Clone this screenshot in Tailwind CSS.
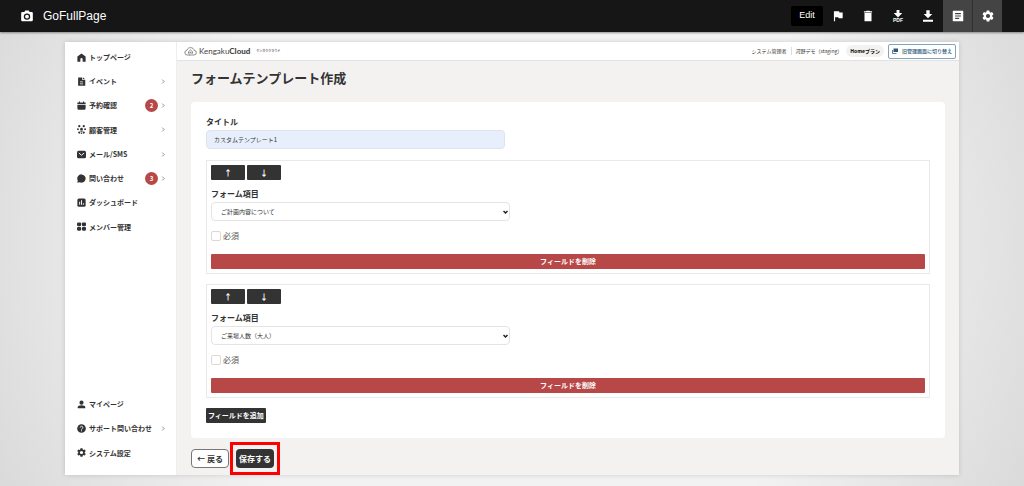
<!DOCTYPE html>
<html lang="ja">
<head>
    <meta charset="UTF-8">
    <meta name="viewport" content="width=device-width, initial-scale=1.0">
    <title>フォームテンプレート作成</title>
    <script src="https://cdn.jsdelivr.net/npm/@tailwindcss/browser@4"></script>
</head>
<body class="min-h-screen bg-radial-[circle_at_50%_50%] from-[#f2f2f2] from-60% to-[#dadada] font-['Noto_Sans_CJK_JP',sans-serif] text-[#333]">

    <!-- Extension toolbar -->
    <header class="flex h-8 items-stretch bg-[#161616] pl-5 pr-[22px] text-white shadow-[0_1px_2px_rgba(0,0,0,0.4)]">
        <div class="flex items-center gap-[9px] font-['Liberation_Sans',sans-serif] text-[12px]">
            <svg class="size-3.5" viewBox="0 0 24 24" fill="currentColor"><path fill-rule="evenodd" d="M4 5h3.5L9 2.500h6L16.500 5H20a2 2 0 0 1 2 2v12a2 2 0 0 1-2 2H4a2 2 0 0 1-2-2V7a2 2 0 0 1 2-2zm8 2.500a5.500 5.500 0 1 0 0 11 5.500 5.500 0 0 0 0-11zm0 2.200a3.300 3.300 0 1 1 0 6.600 3.300 3.300 0 0 1 0-6.600z"/></svg>
            <h1>GoFullPage</h1>
        </div>
        <div class="ml-auto flex items-center">
            <button class="h-5 w-8 rounded-xs bg-black font-['Liberation_Sans',sans-serif] text-[9px]">Edit</button>
            <button class="flex w-[30px] justify-center" aria-label="Flag"><svg class="size-3.5" viewBox="0 0 24 24" fill="currentColor"><path d="M14.400 6L14 4H5v17h2v-7h5.600l.4 2h7V6z"/></svg></button>
            <button class="flex w-[30px] justify-center" aria-label="Delete"><svg class="size-3.5" viewBox="0 0 24 24" fill="currentColor"><path d="M6 21h12V7H6v14zM19 4h-3.500l-1-1h-5l-1 1H5v2h14V4z"/></svg></button>
            <button class="flex w-[30px] flex-col items-center" aria-label="Download PDF">
                <svg class="h-2 w-2.5" viewBox="0 0 14 11" fill="currentColor"><path d="M5 0h4v4h4L7 10.500 1 4h4z"/></svg>
                <span class="font-['Liberation_Sans',sans-serif] text-[5px] font-bold leading-[5px]">PDF</span>
            </button>
            <button class="flex w-[30px] justify-center" aria-label="Download"><svg class="size-4" viewBox="0 0 24 24" fill="currentColor"><path d="M18.500 9h-4V3.500h-5V9h-4l6.500 6.500zM4.500 17.500v3h15v-3z"/></svg></button>
            <button class="flex h-8 w-[30px] items-center justify-center border-r border-[#303030] bg-[#444]" aria-label="Pages"><svg class="size-3.5" viewBox="0 0 24 24" fill="currentColor"><path fill-rule="evenodd" d="M4 3h16a1 1 0 0 1 1 1v16a1 1 0 0 1-1 1H4a1 1 0 0 1-1-1V4a1 1 0 0 1 1-1zm3 4v2h10V7zm0 4v2h10v-2zm0 4v2h7v-2z"/></svg></button>
            <button class="flex h-8 w-[29px] items-center justify-center bg-[#444]" aria-label="Settings"><svg class="size-3.5" viewBox="0 0 24 24" fill="currentColor"><use href="#gear"/></svg></button>
        </div>
    </header>

    <svg class="hidden">
        <path id="gear" d="M19.140 12.940c.04-.3.06-.61.06-.94 0-.32-.02-.64-.07-.94l2.030-1.580a.49.49 0 0 0 .12-.61l-1.920-3.320a.488.488 0 0 0-.59-.22l-2.390.96c-.5-.38-1.030-.7-1.620-.94l-.36-2.540a.484.484 0 0 0-.48-.41h-3.840c-.24 0-.43.17-.47.41l-.36 2.540c-.59.24-1.130.57-1.620.94l-2.390-.96c-.22-.08-.47 0-.59.22L2.740 8.870c-.12.21-.08.47.12.61l2.030 1.580c-.05.3-.09.63-.09.94s.02.64.07.94l-2.030 1.580a.49.49 0 0 0-.12.61l1.920 3.320c.12.22.37.29.59.22l2.390-.96c.5.38 1.030.7 1.620.94l.36 2.540c.05.24.24.41.48.41h3.840c.24 0 .44-.17.47-.41l.36-2.540c.59-.24 1.130-.56 1.620-.94l2.390.96c.22.08.47 0 .59-.22l1.920-3.320c.12-.22.07-.47-.12-.61l-2.010-1.580zM12 15.600A3.600 3.600 0 1 1 12 8.400a3.600 3.600 0 0 1 0 7.200z"/>
        <path id="chevron" d="M2 1l3 3-3 3" fill="none" stroke="#666" stroke-width="1.200"/>
    </svg>

    <div class="mx-[65px] mt-2.5 mb-2.5 flex bg-white shadow-[0_0_5px_rgba(0,0,0,0.15)]">

        <!-- Sidebar -->
        <aside class="flex w-28 shrink-0 flex-col justify-between border-r border-[#eee] pt-[3px] pb-2.5 text-[7px] font-bold">
            <nav class="grid h-[194px] auto-rows-fr pl-3 pr-2.5">
                <a href="#" class="flex items-center gap-[3px]"><svg class="size-[9px]" viewBox="0 0 24 24" fill="currentColor"><path d="M12 1L1 9v14h8v-7a3 3 0 0 1 6 0v7h8V9z"/></svg>トップページ</a>
                <a href="#" class="flex items-center gap-[3px]"><svg class="size-[9px]" viewBox="0 0 24 24" fill="currentColor"><path fill-rule="evenodd" d="M3 1h11v7h8v15H3zM16 1l6 5h-6zM8 12v2h8v-2zm0 5v2h8v-2z"/></svg>イベント<svg class="ml-auto size-[5px]" viewBox="0 0 8 8"><use href="#chevron"/></svg></a>
                <a href="#" class="flex items-center gap-[3px]"><svg class="size-[9px]" viewBox="0 0 24 24" fill="currentColor"><path d="M1 8V4h4V1h3v3h8V1h3v3h4v4zM1 10h22v9a4 4 0 0 1-4 4H5a4 4 0 0 1-4-4z"/></svg>予約確認<span class="ml-auto flex size-[13px] items-center justify-center rounded-full bg-[#b84747] text-[6px] text-white">2</span><svg class="size-[5px]" viewBox="0 0 8 8"><use href="#chevron"/></svg></a>
                <a href="#" class="flex items-center gap-[3px]"><svg class="size-[9px]" viewBox="0 0 24 24" fill="currentColor"><circle cx="6" cy="3" r="3"/><circle cx="18" cy="3" r="3"/><circle cx="12" cy="11" r="3.500"/><circle cx="2.500" cy="11" r="2.500"/><circle cx="21.500" cy="11" r="2.500"/><path d="M8 15h8l-2 3h-4z"/><circle cx="6" cy="20" r="3"/><circle cx="18" cy="20" r="3"/><circle cx="12" cy="22" r="2"/></svg>顧客管理<svg class="ml-auto size-[5px]" viewBox="0 0 8 8"><use href="#chevron"/></svg></a>
                <a href="#" class="flex items-center gap-[3px]"><svg class="size-[9px]" viewBox="0 0 24 24"><rect x="0" y="2" width="24" height="20" rx="4" fill="currentColor"/><path d="M5 8l7 6 7-6" fill="none" stroke="#fff" stroke-width="2.500"/></svg>メール/SMS<svg class="ml-auto size-[5px]" viewBox="0 0 8 8"><use href="#chevron"/></svg></a>
                <a href="#" class="flex items-center gap-[3px]"><svg class="size-[9px]" viewBox="0 0 24 24" fill="currentColor"><path d="M12 1a11 11 0 1 1-5 20.800L1 23l1-6A11 11 0 0 1 12 1z"/></svg>問い合わせ<span class="ml-auto flex size-[13px] items-center justify-center rounded-full bg-[#b84747] text-[6px] text-white">3</span><svg class="size-[5px]" viewBox="0 0 8 8"><use href="#chevron"/></svg></a>
                <a href="#" class="flex items-center gap-[3px]"><svg class="size-[9px]" viewBox="0 0 24 24"><rect x="1" y="1" width="22" height="22" rx="4" fill="currentColor"/><path d="M7 10v8M12 6v12M17 14v4" stroke="#fff" stroke-width="2.500"/></svg>ダッシュボード</a>
                <a href="#" class="flex items-center gap-[3px]"><svg class="size-[9px]" viewBox="0 0 24 24" fill="currentColor"><rect x="0" y="1" width="11" height="10" rx="3"/><rect x="13" y="1" width="11" height="10" rx="3"/><rect x="0" y="13" width="11" height="10" rx="3"/><rect x="13" y="13" width="11" height="10" rx="3"/></svg>メンバー管理</a>
            </nav>
            <nav class="grid h-[73px] auto-rows-fr pl-3 pr-2.5">
                <a href="#" class="flex items-center gap-[3px]"><svg class="size-[9px]" viewBox="0 0 24 24" fill="currentColor"><circle cx="12" cy="7" r="5.500"/><path d="M2 22v-3c0-3 4-5 10-5s10 2 10 5v3z"/></svg>マイページ</a>
                <a href="#" class="flex items-center gap-[3px]"><svg class="size-[9px]" viewBox="0 0 24 24"><circle cx="12" cy="12" r="11.500" fill="currentColor"/><path d="M8.500 9.500a3.500 3.500 0 1 1 5.500 2.800c-1.300.9-2 1.200-2 2.700M12 17v2.500" fill="none" stroke="#fff" stroke-width="2.500"/></svg>サポート問い合わせ<svg class="ml-auto size-[5px]" viewBox="0 0 8 8"><use href="#chevron"/></svg></a>
                <a href="#" class="flex items-center gap-[3px]"><svg class="size-[9px]" viewBox="2 2 20 20" fill="currentColor"><use href="#gear"/></svg>システム設定</a>
            </nav>
        </aside>

        <div class="min-w-0 flex-1 bg-[#f3f2f0]">
            <!-- App header -->
            <div class="flex h-[19px] items-center border-b border-[#e4e2e0] bg-white pl-[7px] pr-[3px] text-[5px]">
                <svg class="h-[9px] w-[13px]" viewBox="0 0 36 27" fill="none" stroke="#555" stroke-width="2"><path d="M9 24a7 7 0 0 1-2-14C9 4 13 2 18 2c6 0 10 3 11 8a7 7 0 0 1-1 14H14"/><path d="M12 20v-6l6-5 6 5v6M16 20v-4h4v4M9 24h7"/></svg>
                <span class="ml-0.5 font-[Lato,sans-serif] text-[8px] text-[#444]">Kengaku<b class="font-black">Cloud</b></span>
                <span class="ml-1.5 text-[3px] font-bold text-[#666]">ケンガククラウド</span>
                <span class="ml-auto border-r border-[#ddd] pr-[5px]">システム管理者</span>
                <span class="pl-[3px]">河野デモ（staging）</span>
                <span class="ml-1 rounded-full bg-[#f3f2f0] px-1 py-0.5 font-bold text-black">Homeプラン</span>
                <button class="ml-1 flex h-[15px] items-center gap-1 rounded-xs border border-[#83a3bd] px-[3px] font-medium text-[#2d5878]"><svg class="size-[6px]" viewBox="0 0 12 12" fill="currentColor"><path d="M3 1h9v7H3z"/><path d="M1 4v7h8" fill="none" stroke="currentColor" stroke-width="1.500"/></svg>旧管理画面に切り替え</button>
            </div>

            <main class="px-3.5">
                <h2 class="mt-2 text-[13px] font-bold leading-[18px]">フォームテンプレート作成</h2>

                <form>
                    <div class="mt-[15px] rounded-sm bg-white px-[15px] pt-[15px] pb-[15px]">
                        <label for="title" class="block text-[8px] font-bold leading-[10px]">タイトル</label>
                        <input id="title" type="text" value="カスタムテンプレート1" class="mt-[3px] block h-[19px] w-[299px] rounded-sm border border-[#dfe3ea] bg-[#e7effc] px-[7px] text-[6px]">

                        <!-- Field 1 -->
                        <div class="mt-[11px] border border-[#e9e9e9] p-1">
                            <div class="flex gap-0.5 text-[8px] font-bold leading-[15px] text-white">
                                <button type="button" class="h-[15px] w-[34px] rounded-[1px] bg-[#333]">↑</button>
                                <button type="button" class="h-[15px] w-[34px] rounded-[1px] bg-[#333]">↓</button>
                            </div>
                            <label for="item1" class="mt-2 block text-[8px] font-bold leading-3">フォーム項目</label>
                            <div class="relative mt-0.5 w-[299px]">
                                <select id="item1" class="block h-[19px] w-full appearance-none rounded-sm border border-[#e4e4e4] bg-white px-[9px] text-[6px]">
                                    <option>ご計画内容について</option>
                                </select>
                                <svg class="pointer-events-none absolute right-0.5 top-2 h-1 w-[5px]" viewBox="0 0 10 8" fill="none" stroke="#222" stroke-width="3"><path d="M1 2l4 4 4-4"/></svg>
                            </div>
                            <label class="mt-[9px] flex h-3 items-center gap-0.5 text-[8px] text-[#555]">
                                <input type="checkbox" class="size-[10px] appearance-none rounded-[2px] border border-[#dcd8d4] bg-white checked:bg-[#333]">必須
                            </label>
                            <button type="button" class="mt-3 block h-[15px] w-full rounded-[1px] bg-[#b84747] text-[7px] font-bold text-white">フィールドを削除</button>
                        </div>

                        <!-- Field 2 -->
                        <div class="mt-2.5 border border-[#e9e9e9] p-1">
                            <div class="flex gap-0.5 text-[8px] font-bold leading-[15px] text-white">
                                <button type="button" class="h-[15px] w-[34px] rounded-[1px] bg-[#333]">↑</button>
                                <button type="button" class="h-[15px] w-[34px] rounded-[1px] bg-[#333]">↓</button>
                            </div>
                            <label for="item2" class="mt-2 block text-[8px] font-bold leading-3">フォーム項目</label>
                            <div class="relative mt-0.5 w-[299px]">
                                <select id="item2" class="block h-[19px] w-full appearance-none rounded-sm border border-[#e4e4e4] bg-white px-[9px] text-[6px]">
                                    <option>ご来場人数（大人）</option>
                                </select>
                                <svg class="pointer-events-none absolute right-0.5 top-2 h-1 w-[5px]" viewBox="0 0 10 8" fill="none" stroke="#222" stroke-width="3"><path d="M1 2l4 4 4-4"/></svg>
                            </div>
                            <label class="mt-[9px] flex h-3 items-center gap-0.5 text-[8px] text-[#555]">
                                <input type="checkbox" class="size-[10px] appearance-none rounded-[2px] border border-[#dcd8d4] bg-white checked:bg-[#333]">必須
                            </label>
                            <button type="button" class="mt-3 block h-[15px] w-full rounded-[1px] bg-[#b84747] text-[7px] font-bold text-white">フィールドを削除</button>
                        </div>

                        <button type="button" class="mt-2.5 block h-[15px] rounded-[1px] bg-[#333] px-0.5 text-[7px] font-bold text-white">フィールドを追加</button>
                    </div>

                    <div class="mt-1 flex items-center gap-px text-[8px] font-bold">
                        <button type="button" class="h-[19px] w-[38px] rounded-sm border border-[#777] bg-white">← 戻る</button>
                        <div class="border-3 border-[#f00] px-[3px] py-1">
                            <button type="submit" class="block h-[19px] w-[38px] rounded-sm bg-[#333] text-white">保存する</button>
                        </div>
                    </div>
                </form>
            </main>
        </div>
    </div>
</body>
</html>
